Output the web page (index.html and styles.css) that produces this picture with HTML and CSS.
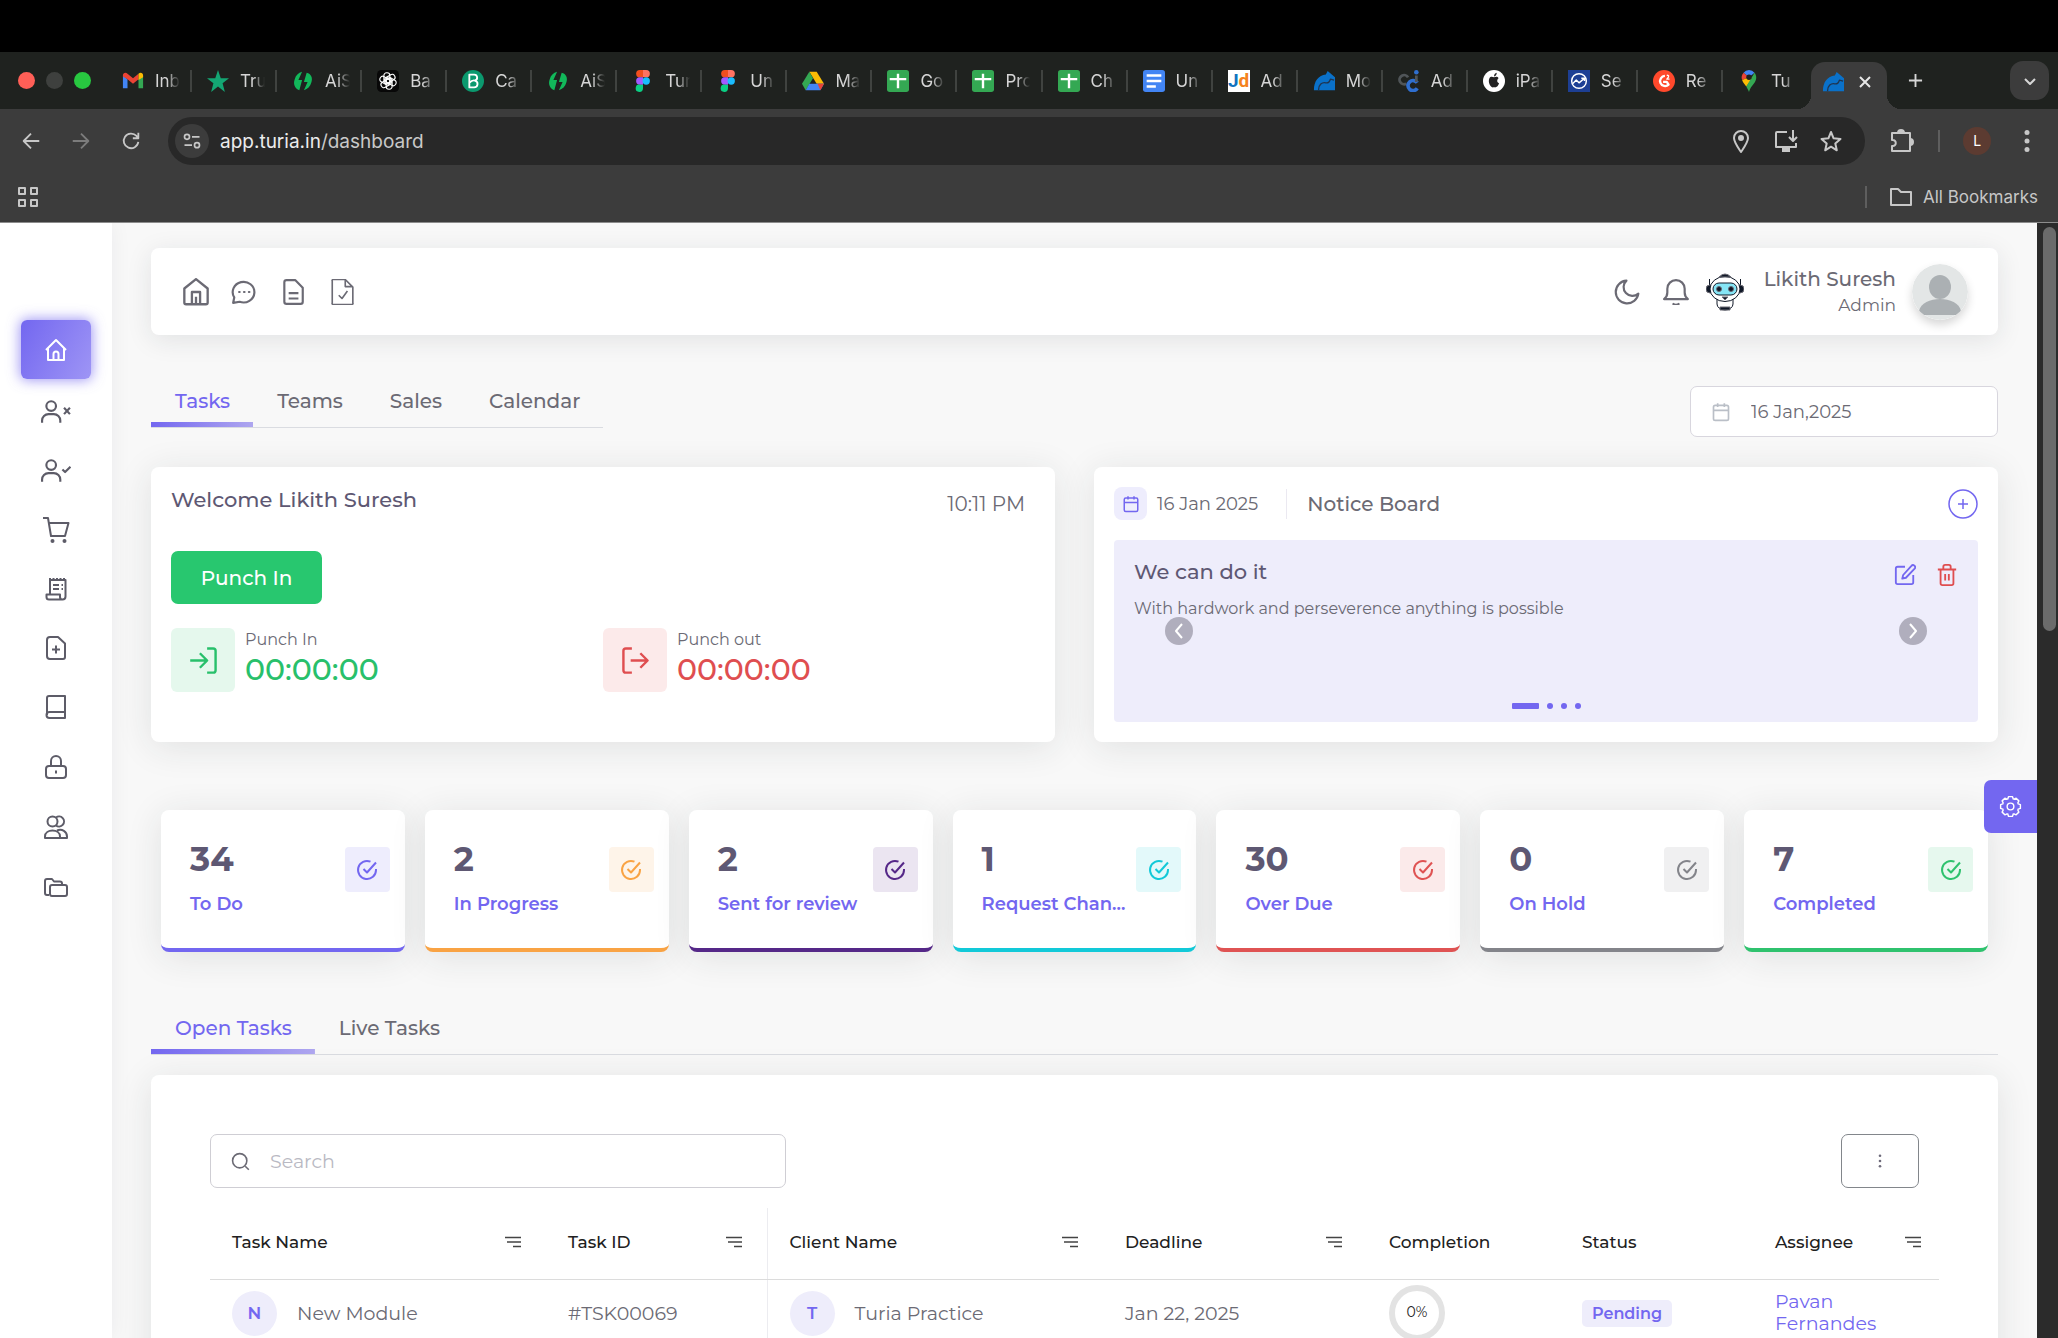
FILE: index.html
```html
<!DOCTYPE html>
<html lang="en">
<head>
<meta charset="utf-8">
<title>Dashboard</title>
<link rel="stylesheet" href="styles.css">
</head>
<body>
<svg class="defs" aria-hidden="true">
  <symbol id="ai" viewBox="0 0 24 24"><path d="M11 2 7 11h4l-3 11C3 20 1 15 3 10c1-4 4-7 8-8z" fill="#12b85a"/><path d="M13 22l4-9h-4l3-10c5 1 7 6 5 11-1 4-4 7-8 8z" fill="#12b85a"/></symbol>
  <symbol id="figma" viewBox="0 0 24 24"><path d="M8.500 0H12v8H8.500a4 4 0 0 1 0-8z" fill="#f24e1e"/><path d="M12 0h3.500a4 4 0 0 1 0 8H12z" fill="#ff7262"/><path d="M8.500 8H12v8H8.500a4 4 0 0 1 0-8z" fill="#a259ff"/><circle cx="15.500" cy="12" r="4" fill="#1abcfe"/><path d="M8.500 16H12v4a4 4 0 1 1-3.500-4z" fill="#0acf83"/></symbol>
  <symbol id="sheet" viewBox="0 0 24 24"><rect width="24" height="24" rx="3" fill="#34a853"/><path d="M12 4v16M3 10h18" stroke="#fff" stroke-width="2.600"/></symbol>
  <symbol id="turia" viewBox="0 0 24 24"><path d="M1 22C1 12 6 6 14 5l2-4 8 7v14H1z" fill="#0a71c9"/><path d="M6 22c0-6 4-9 8-8 3 .500 4-1 5-4l4 1" stroke="#1f3550" stroke-width="1.500" fill="none"/></symbol>
  <symbol id="check" viewBox="0 0 24 24"><path d="M21 11v1a9 9 0 1 1-5.500-8.300M8.500 11l3.500 3.500L21 4.500"/></symbol>
  <symbol id="cal" viewBox="0 0 24 24"><rect x="3" y="4" width="18" height="18" rx="2"/><path d="M8 1.500V6M16 1.500V6M3 10h18"/></symbol>
  <symbol id="sort" viewBox="0 0 16 12"><path d="M0 1.500h16M2 6h14M8 10.500h8"/></symbol>
  <symbol id="user" viewBox="0 0 28 24"><circle cx="9.500" cy="6.500" r="4.500"/><path d="M1 22v-2a6 6 0 0 1 6-6h5a6 6 0 0 1 6 6v2"/></symbol>
  <symbol id="tooth" viewBox="-12 -12 24 24" overflow="visible"><path d="M7.390-3.060L10.310-2V2L7.390 3.060"/></symbol>
</svg>

<div class="topbar"></div>
<div class="tabstrip">
  <div class="lights"><i class="red"></i><i class="off"></i><i class="green"></i></div>
  <div class="tabs">
    <div class="tab"><svg viewBox="0 0 24 24"><path d="M1 6v14h5V10z" fill="#4285f4"/><path d="M23 6v14h-5V10z" fill="#34a853"/><path d="M1 6c0-3 3-4 5-2l6 5 6-5v6l-6 5-6-5-5-3z" fill="#ea4335"/><path d="M18 4c2-2 5-1 5 2v2l-5 3z" fill="#fbbc04"/></svg><span>Inb</span></div>
    <div class="tab"><svg viewBox="0 0 24 24"><path d="M12 0l3 9h9l-7 5.500L19.500 24 12 18l-7.500 6L7 14.500 0 9h9z" fill="#14a673"/></svg><span>Tru</span></div>
    <div class="tab"><svg><use href="#ai"/></svg><span>AiS</span></div>
    <div class="tab"><svg viewBox="0 0 24 24"><rect width="24" height="24" rx="5" fill="#080808"/><g fill="none" stroke="#fff" stroke-width="1.200"><rect x="7.500" y="3" width="6.500" height="12" rx="3" id="petal"/><use href="#petal" transform="rotate(60 12 12)"/><use href="#petal" transform="rotate(120 12 12)"/><use href="#petal" transform="rotate(180 12 12)"/><use href="#petal" transform="rotate(240 12 12)"/><use href="#petal" transform="rotate(300 12 12)"/></g></svg><span>Ba</span></div>
    <div class="tab"><svg viewBox="0 0 24 24"><circle cx="12" cy="12" r="12" fill="#0b996e"/><path d="M8 5h5a3.300 3.300 0 0 1 1 6.500A3.800 3.800 0 0 1 13 19H8zM8 14c2-2 4-3 6-2.500" fill="none" stroke="#fff" stroke-width="2"/></svg><span>Ca</span></div>
    <div class="tab"><svg><use href="#ai"/></svg><span>AiS</span></div>
    <div class="tab"><svg><use href="#figma"/></svg><span>Tur</span></div>
    <div class="tab"><svg><use href="#figma"/></svg><span>Un</span></div>
    <div class="tab"><svg viewBox="0 0 24 24"><path d="M8 2h8l8 13h-8z" fill="#fbbc04"/><path d="M8 2 0 15l4 7L12 9z" fill="#34a853"/><path d="M8 15h16l-4 7H4z" fill="#4285f4"/><path d="M17 15h7l-4 7z" fill="#ea4335"/></svg><span>Ma</span></div>
    <div class="tab"><svg><use href="#sheet"/></svg><span>Go</span></div>
    <div class="tab"><svg><use href="#sheet"/></svg><span>Pro</span></div>
    <div class="tab"><svg><use href="#sheet"/></svg><span>Ch</span></div>
    <div class="tab"><svg viewBox="0 0 24 24"><rect width="24" height="24" rx="3" fill="#4285f4"/><path d="M4 6h16M4 12h16M4 18h10" stroke="#fff" stroke-width="2.600"/></svg><span>Un</span></div>
    <div class="tab"><b class="jd"><em>J</em>d</b><span>Ad</span></div>
    <div class="tab"><svg><use href="#turia"/></svg><span>Mo</span></div>
    <div class="tab"><svg viewBox="0 0 24 24"><g fill="none"><path d="M11 8a5 5 0 1 0-2 7" stroke="#505558" stroke-width="3"/><path d="M21 14a5.500 5.500 0 1 0 0 6" stroke="#2f6fd0" stroke-width="4"/><path d="M20 6v7" stroke="#505558" stroke-width="3"/></g><circle cx="20" cy="2.500" r="2.500" fill="#2f6fd0"/></svg><span>Ad</span></div>
    <div class="tab"><svg viewBox="0 0 24 24"><circle cx="12" cy="12" r="12" fill="#fff"/><path d="M17 9c-1-2-3-2-5-1-2-1-4-1-5 1-2 4 1 10 4 10l1-.500 1 .500c2 0 4-2 4.500-4.500-2.500-1-2.500-4-.500-5.500zM12 7c0-2 1-3.500 3-4 0 2-1 4-3 4z" fill="#222"/></svg><span>iPa</span></div>
    <div class="tab"><svg viewBox="0 0 24 24"><path d="M0 0h24v24H0z" fill="#1d3f94"/><g fill="none" stroke="#fff" stroke-width="1.600"><circle cx="12" cy="12" r="8"/><path d="M5 15l4-4 3 3 6-5M14.500 9H18v3"/></g></svg><span>Se</span></div>
    <div class="tab"><svg viewBox="0 0 24 24"><circle cx="12" cy="12" r="12" fill="#ff492c"/><g fill="none" stroke="#fff"><path d="M13 6.500a5.500 5.500 0 1 0 4 9.500l-2-3h-4" stroke-width="2.500"/><path d="M15 6c2-1 3.500 1 0 4h3" stroke-width="1.400"/></g></svg><span>Re</span></div>
    <div class="tab"><svg viewBox="0 0 24 24"><path d="M12 0a8 8 0 0 0-6 3l6 5 6-5a8 8 0 0 0-6-3z" fill="#4285f4"/><path d="M6 3a8 8 0 0 0-1.500 8L12 8z" fill="#ea4335"/><path d="M4.500 11c1 3 3 5 4.500 7l8-10-5 0z" fill="#fbbc04"/><path d="M18 3c3 4 2 8 0 11-3 4-5 6-6 10-1-3-2-4-3-6z" fill="#34a853"/><circle cx="12" cy="8" r="3" fill="#1f221f"/></svg><span>Tu</span></div>
  </div>
  <div class="tab-active"><svg><use href="#turia"/></svg><button class="plain" aria-label="Close tab"><svg class="x" viewBox="0 0 12 12"><path d="M1 1l10 10M11 1L1 11"/></svg></button></div>
  <button class="plain newtab" aria-label="New tab"><svg viewBox="0 0 16 16"><path d="M8 1v14M1 8h14"/></svg></button>
  <button class="plain tabsearch" aria-label="Search tabs"><svg viewBox="0 0 12 12"><path d="M1 4l5 5 5-5"/></svg></button>
</div>

<div class="chrome">
  <div class="toolbar">
    <div class="navbtns">
      <button class="plain" aria-label="Back"><svg viewBox="0 0 24 24"><path d="M21 12H4M12 4l-8 8 8 8"/></svg></button>
      <button class="plain dim" aria-label="Forward"><svg viewBox="0 0 24 24"><path d="M3 12h17M12 4l8 8-8 8"/></svg></button>
      <button class="plain" aria-label="Reload"><svg viewBox="0 0 24 24"><path d="M20 13a8 8 0 1 1-2-6.500L20 9M20 3v6h-6"/></svg></button>
    </div>
    <div class="urlbar">
      <span class="site"><svg viewBox="0 0 24 24"><circle cx="6" cy="7" r="3"/><path d="M12 7h9M3 17h9"/><circle cx="18" cy="17" r="3"/></svg></span>
      <span class="url">app.turia.in<span>/dashboard</span></span>
      <div class="urlicons">
        <svg viewBox="0 0 24 24"><path d="M12 23C8 17 5 13 5 9a7 7 0 0 1 14 0c0 4-3 8-7 14z"/><circle cx="12" cy="9" r="2" fill="currentColor"/></svg>
        <svg viewBox="0 0 24 24"><path d="M13 3H3a1 1 0 0 0-1 1v14h20v-4M19 1v11M15 8l4 4 4-4"/><path d="M8 21h8" stroke-width="4"/></svg>
        <svg viewBox="0 0 24 24"><path d="M12 3l2.600 6.300 6.900.600-5.200 4.600 1.500 6.800L12 17.700l-5.800 3.600 1.500-6.800L2.500 9.900l6.900-.600z"/></svg>
      </div>
    </div>
    <div class="righticons">
      <svg viewBox="0 0 24 24"><path d="M2 4h18v18H2v-5c5 1 5-7 0-6z"/><path d="M8 4a3 3 0 0 1 6 0zM20 10a3 3 0 0 1 0 6z" fill="currentColor"/></svg>
      <i class="vline"></i>
      <span class="avatar-l">L</span>
      <svg viewBox="0 0 24 24"><g stroke="none" fill="currentColor"><circle cx="12" cy="3.500" r="2.500"/><circle cx="12" cy="12" r="2.500"/><circle cx="12" cy="20.500" r="2.500"/></g></svg>
    </div>
  </div>
  <div class="bookmarks">
    <svg viewBox="0 0 20 20"><path d="M1 1h6v6H1zM13 1h6v6h-6zM1 13h6v6H1zM13 13h6v6h-6z"/></svg>
    <div class="allbm"><i class="vline"></i><svg viewBox="0 0 24 20"><path d="M2 18V2h7l3 3h10v13z"/></svg><span>All Bookmarks</span></div>
  </div>
</div>

<div class="app">
  <nav class="sidebar">
    <a href="#" class="active" aria-label="Home"><svg viewBox="0 0 24 24"><path d="M2 12L12 2l10 10M4 10v12h16V10M9.500 22v-6a2.500 2.500 0 0 1 5 0v6"/></svg></a>
    <a href="#" aria-label="Leads"><svg class="wide" viewBox="0 0 28 24"><use href="#user"/><path d="M21.500 8l5.500 6M27 8l-5.500 6"/></svg></a>
    <a href="#" aria-label="Clients"><svg class="wide" viewBox="0 0 28 24"><use href="#user"/><path d="M20 10.500l2.500 2.500 5-5"/></svg></a>
    <a href="#" aria-label="Sales"><svg class="wide" viewBox="0 0 28 26"><path d="M1 1h5l3 18h14l3.500-13H7"/><g stroke="none" fill="currentColor"><circle cx="10.500" cy="24" r="2"/><circle cx="22.500" cy="24" r="2"/></g></svg></a>
    <a href="#" aria-label="Invoices"><svg viewBox="0 0 24 24"><path d="M6 17V2M6 3h15.500v16.500a3 3 0 0 1-3 3H5A2.500 2.500 0 0 1 2.500 20v-2.500H16V20a2.500 2.500 0 0 0 2.500 2.500M9 8h6M9 12h6M17.500 8h1.500M17.500 12h1.500"/><path d="M5 2h17" stroke-dasharray="2 1.500"/></svg></a>
    <a href="#" aria-label="Add document"><svg viewBox="0 0 24 24"><path d="M6 1h8l7 6.500V21a2 2 0 0 1-2 2H6a3 3 0 0 1-3-3V4a3 3 0 0 1 3-3zM12 9.500v8M8 13.500h8"/></svg></a>
    <a href="#" aria-label="Library"><svg viewBox="0 0 24 24"><path d="M3 20V3a2 2 0 0 1 2-2h16v22H5.500a2.500 2.500 0 0 1 0-6H21"/></svg></a>
    <a href="#" aria-label="Passwords"><svg viewBox="0 0 24 24"><rect x="2" y="11" width="20" height="12" rx="3"/><path d="M7 11V6a5 5 0 0 1 10 0v5M12 15.500v3"/></svg></a>
    <a href="#" aria-label="Teams"><svg viewBox="0 0 24 24"><circle cx="8.500" cy="6.500" r="5"/><path d="M12 2.500a5 5 0 1 1 0 8M1 23v-1.500c0-8 15-8 15 0V23zM13 15.500c5-2 10 1 10 6V23h-7"/></svg></a>
    <a href="#" aria-label="Files"><svg viewBox="0 0 24 24"><path d="M5 20H3a2 2 0 0 1-2-2V6a2 2 0 0 1 2-2h5l2 2.500h6a2 2 0 0 1 2 2V10"/><rect x="6" y="10" width="17" height="11" rx="2"/></svg></a>
  </nav>

  <main class="main">
    <header class="card header">
      <div class="quick">
        <svg viewBox="0 0 24 24"><path d="M2 21V9l10-8 10 8v12a1.500 1.500 0 0 1-1.500 1.500h-17A1.500 1.500 0 0 1 2 21zM8.500 22.500V12h7v10.500M12 22V16"/></svg>
        <svg viewBox="0 0 24 24"><path d="M3 17A10 9.500 0 1 1 8 21l-6 1z"/><path d="M7.500 12h.500M12 12h.500M16.500 12h.500" stroke-linecap="round"/></svg>
        <svg viewBox="0 0 24 24"><path d="M6 1h8l7 7v13a2 2 0 0 1-2 2H6a2 2 0 0 1-2-2V3a2 2 0 0 1 2-2zM8 13h9M8 18h9"/></svg>
        <svg class="thin" viewBox="0 0 24 24"><path d="M4 .500h11l7 7V22a1 1 0 0 1-1 1.500H4A1 1 0 0 1 3 22V2A1 1 0 0 1 4 .500zM15 .500V7h7M9 15l3 3 5-7"/></svg>
      </div>
      <div class="account">
        <svg viewBox="0 0 24 24"><path d="M22.500 13.500A10.500 10.500 0 1 1 11.500 1.500a8 8 0 0 0 11 12z"/></svg>
        <svg viewBox="0 0 24 24"><path d="M1 18.500h22c-2-1.500-3-3-3-6V9A8 8 0 0 0 4 9v3.500c0 3-1 4.500-3 6zM9 22.500a4 4 0 0 0 6 0"/></svg>
        <svg class="bot" viewBox="0 0 38 38"><path d="M3.500 6v10M34.500 6v10" stroke="#101827"/><circle cx="4" cy="16" r="4" fill="#101827"/><circle cx="34" cy="16" r="4" fill="#101827"/><path d="M11 25h16v6a8 6 0 0 1-16 0z" fill="#fff" stroke="#101827"/><path d="M14 34h10v3H14z" fill="#101827"/><ellipse cx="19" cy="16" rx="15" ry="12.500" fill="#fff" stroke="#101827"/><path d="M13 4q6-6 12 0z" fill="#101827"/><rect x="7" y="10" width="24" height="12" rx="6" fill="#86e5f5" stroke="#101827"/><circle cx="13" cy="16" r="2.500" fill="#101827"/><circle cx="25" cy="16" r="2.500" fill="#101827"/><path d="M16 24h6l-3 3z" fill="#101827"/></svg>
        <div class="who"><strong>Likith Suresh</strong><span>Admin</span></div>
        <svg class="avatar" viewBox="0 0 56 56"><circle cx="28" cy="28" r="28" fill="#e3e6e6"/><ellipse cx="28" cy="23" rx="11" ry="12" fill="#abb0b3"/><path d="M7 47c3-16 39-16 42 0q-1 4-4 4H11q-3 0-4-4z" fill="#abb0b3"/></svg>
      </div>
    </header>

    <div class="filters">
      <div class="pagetabs" role="tablist">
        <button class="on" role="tab">Tasks</button><button role="tab">Teams</button><button role="tab">Sales</button><button role="tab">Calendar</button>
      </div>
      <label class="date"><svg><use href="#cal"/></svg><input type="text" value="16 Jan,2025" aria-label="Date"></label>
    </div>

    <div class="duo">
      <section class="card welcome">
        <div class="whead"><h2>Welcome Likith Suresh</h2><time>10:11 PM</time></div>
        <button class="punch">Punch In</button>
        <div class="punches">
          <div class="pitem in"><i><svg viewBox="0 0 24 24"><path d="M15 2h5a2 2 0 0 1 2 2v16a2 2 0 0 1-2 2h-5M1 12h14M9 6l6 6-6 6"/></svg></i><div><span>Punch In</span><b>00:00:00</b></div></div>
          <div class="pitem out"><i><svg viewBox="0 0 24 24"><path d="M9 2H4a2 2 0 0 0-2 2v16a2 2 0 0 0 2 2h5M8 12h14M16 6l6 6-6 6"/></svg></i><div><span>Punch out</span><b>00:00:00</b></div></div>
        </div>
      </section>
      <section class="card notice">
        <div class="nhead">
          <i class="chip"><svg><use href="#cal"/></svg></i><span class="ndate">16 Jan 2025</span><i class="sep"></i><h2>Notice Board</h2>
          <button class="plain add" aria-label="Add notice"><svg viewBox="0 0 30 30"><circle cx="15" cy="15" r="14"/><path d="M15 10v10M10 15h10"/></svg></button>
        </div>
        <div class="slide">
          <div class="shead"><h3>We can do it</h3>
            <div class="acts"><button class="plain edit" aria-label="Edit"><svg viewBox="0 0 24 24"><path d="M12 3H4a2 2 0 0 0-2 2v15a2 2 0 0 0 2 2h15a2 2 0 0 0 2-2v-8M19 2a2.100 2.100 0 0 1 3.500 3L13 15l-4 1 1-4z"/></svg></button><button class="plain del" aria-label="Delete"><svg viewBox="0 0 24 24"><path d="M2 6h20M5 6v15a2 2 0 0 0 2 2h10a2 2 0 0 0 2-2V6M8 5V3a2 2 0 0 1 2-2h4a2 2 0 0 1 2 2v2M10 11v7M14 11v7"/></svg></button></div>
          </div>
          <p>With hardwork and perseverence anything is possible</p>
          <button class="plain arrow prev" aria-label="Previous"><svg viewBox="0 0 28 28"><path d="M17 7l-6 7 6 7"/></svg></button>
          <button class="plain arrow next" aria-label="Next"><svg viewBox="0 0 28 28"><path d="M11 7l6 7-6 7"/></svg></button>
          <div class="dots"><i class="bar"></i><i></i><i></i><i></i></div>
        </div>
      </section>
    </div>

    <div class="stats">
      <div class="stat c1"><div><b>34</b><a href="#">To Do</a></div><i><svg><use href="#check"/></svg></i></div>
      <div class="stat c2"><div><b>2</b><a href="#">In Progress</a></div><i><svg><use href="#check"/></svg></i></div>
      <div class="stat c3"><div><b>2</b><a href="#">Sent for review</a></div><i><svg><use href="#check"/></svg></i></div>
      <div class="stat c4"><div><b>1</b><a href="#">Request Chan...</a></div><i><svg><use href="#check"/></svg></i></div>
      <div class="stat c5"><div><b>30</b><a href="#">Over Due</a></div><i><svg><use href="#check"/></svg></i></div>
      <div class="stat c6"><div><b>0</b><a href="#">On Hold</a></div><i><svg><use href="#check"/></svg></i></div>
      <div class="stat c7"><div><b>7</b><a href="#">Completed</a></div><i><svg><use href="#check"/></svg></i></div>
    </div>

    <div class="pagetabs full" role="tablist"><button class="on" role="tab">Open Tasks</button><button role="tab">Live Tasks</button></div>

    <section class="card tasks">
      <div class="tools">
        <label class="search"><svg viewBox="0 0 24 24"><circle cx="11" cy="11" r="9"/><path d="M18 18l4.500 4.500"/></svg><input type="text" placeholder="Search" aria-label="Search"></label>
        <button class="more" aria-label="More"><svg viewBox="0 0 4 16"><circle cx="2" cy="2" r="1.500"/><circle cx="2" cy="8" r="1.500"/><circle cx="2" cy="14" r="1.500"/></svg></button>
      </div>
      <table>
        <colgroup><col class="w1"><col class="w2"><col class="w1"><col class="w3"><col class="w4"><col class="w4"><col class="w5"></colgroup>
        <thead><tr>
          <th><div>Task Name<svg><use href="#sort"/></svg></div></th>
          <th><div>Task ID<svg><use href="#sort"/></svg></div></th>
          <th class="split"><div>Client Name<svg><use href="#sort"/></svg></div></th>
          <th><div>Deadline<svg><use href="#sort"/></svg></div></th>
          <th>Completion</th>
          <th>Status</th>
          <th><div>Assignee<svg><use href="#sort"/></svg></div></th>
        </tr></thead>
        <tbody><tr>
          <td><div class="ent"><b>N</b>New Module</div></td>
          <td>#TSK00069</td>
          <td class="split"><div class="ent"><b>T</b>Turia Practice</div></td>
          <td>Jan 22, 2025</td>
          <td><span class="ring">0%</span></td>
          <td><span class="badge">Pending</span></td>
          <td><a href="#" class="assignee">Pavan Fernandes</a></td>
        </tr></tbody>
      </table>
    </section>
  </main>
  <button class="plain gear" aria-label="Settings"><svg viewBox="-12 -12 24 24"><g id="quarter"><path d="M7.390-3.060L10.310-2V2L7.390 3.060"/><path d="M7.390-3.060L10.310-2V2L7.390 3.060" transform="rotate(45)"/></g><use href="#quarter" transform="rotate(90)"/><use href="#quarter" transform="rotate(180)"/><use href="#quarter" transform="rotate(270)"/><circle r="3.500"/></svg></button>
  <div class="scroll"><i></i></div>
</div>
</body>
</html>
```
FILE: styles.css
```css
* { box-sizing: border-box; }
body {
  margin: 0;
  height: 100vh;
  overflow: hidden;
  display: flex;
  flex-direction: column;
  background: #f8f8f8;
  font-family: Montserrat, Inter, sans-serif;
  font-size: 18px;
  color: #6b6a74;
}
svg { display: block; width: 24px; height: 24px; fill: none; stroke: currentColor; stroke-width: 2; stroke-linejoin: round; flex: none; }
i, em { font-style: normal; }
h2, h3, p { margin: 0; font-weight: 500; }
a { color: inherit; text-decoration: none; }
button, input { font: inherit; color: inherit; }
.defs { position: absolute; width: 0; height: 0; }
.plain { border: 0; background: none; padding: 0; display: flex; align-items: center; justify-content: center; }

/* Browser frame */
.topbar { height: 52px; background: #000; flex: none; }
.tabstrip { height: 57px; flex: none; background: #1f221f; display: flex; align-items: center; color: #d6d6d6; padding-right: 9px; font-family: Inter, sans-serif; }
.lights { display: flex; gap: 11px; width: 107px; padding-left: 18px; }
.lights i { width: 17px; height: 17px; border-radius: 50%; }
.red { background: #ff5f57; }
.off { background: #3e403e; }
.green { background: #28c840; }
.tabs { flex: 1; display: flex; min-width: 0; }
.tab { flex: 1; display: flex; align-items: center; gap: 11px; padding-left: 15px; height: 22px; border-right: 2px solid #404340; min-width: 0; font-size: 17px; }
.tab:last-child { border-color: transparent; }
.tab svg, .tab-active svg { width: 22px; height: 22px; stroke: none; }
.tab span { white-space: nowrap; mask-image: linear-gradient(90deg, #000 12px, transparent 25px); }
.jd { width: 22px; height: 22px; background: #fff; color: #f58220; font-size: 19px; line-height: 22px; text-align: center; font-family: Roboto, sans-serif; }
.jd em { color: #1274c0; }
.tab-active { position: relative; align-self: flex-end; width: 76px; height: 47px; margin: 0 21px 0 3px; border-radius: 14px 14px 0 0; background: #3c3c3c; display: flex; align-items: center; gap: 15px; padding-left: 11px; padding-bottom: 8px; }
.tab-active::before, .tab-active::after { content: ""; position: absolute; bottom: 0; width: 14px; height: 14px; }
.tab-active::before { left: -14px; background: radial-gradient(circle at 0 0, transparent 14px, #3c3c3c 14px); }
.tab-active::after { right: -14px; background: radial-gradient(circle at 100% 0, transparent 14px, #3c3c3c 14px); }
.tab-active svg.x { width: 12px; height: 12px; stroke: #e6e6e6; }
.newtab svg { width: 15px; height: 15px; }
.newtab { margin-right: 87px; }
.tabsearch { width: 39px; height: 39px; border-radius: 13px; background: #3c3c3c; }
.tabsearch svg { width: 12px; height: 12px; }
.chrome { flex: none; background: #3c3c3c; color: #c7c7c7; border-bottom: 1px solid #8c8c8c; font-family: Inter, sans-serif; }
.toolbar { height: 64px; display: flex; align-items: center; padding: 0 19px 0 20px; }
.navbtns { display: flex; gap: 28px; width: 148px; }
.navbtns svg { width: 22px; height: 22px; stroke-width: 2; }
.dim { color: #7c7c7c; }
.urlbar { flex: 1; height: 48px; border-radius: 24px; background: #282828; display: flex; align-items: center; padding: 0 22px 0 7px; }
.site { width: 34px; height: 34px; border-radius: 50%; background: #3c3c3c; display: flex; align-items: center; justify-content: center; }
.site svg { width: 20px; height: 20px; }
.url { flex: 1; margin-left: 11px; font-size: 19px; color: #ececec; }
.url span { color: #c9c9c9; }
.urlicons { display: flex; gap: 21px; }
.urlicons svg, .righticons svg { width: 24px; height: 24px; }
.righticons { display: flex; align-items: center; padding-left: 25px; width: 174px; justify-content: space-between; }
.vline { width: 2px; height: 22px; background: #5e5e5e; }
.avatar-l { width: 28px; height: 28px; border-radius: 50%; background: #5c3b31; color: #fff; font-size: 14px; line-height: 28px; text-align: center; }
.bookmarks { height: 49px; display: flex; justify-content: space-between; align-items: center; padding: 0 20px 2px 18px; font-size: 17px; }
.bookmarks svg { width: 20px; height: 20px; }
.allbm { display: flex; align-items: center; }
.allbm svg { width: 24px; margin: 0 10px 0 22px; }

/* Application */
.app { position: relative; flex: 1; min-height: 0; display: flex; overflow: hidden; }
.sidebar { width: 112px; flex: none; background: #fff; padding-top: 97px; display: flex; flex-direction: column; align-items: center; color: #5d5c68; box-shadow: 0 0 20px rgba(34, 41, 47, .06); }
.sidebar a { width: 70px; height: 59px; display: flex; align-items: center; justify-content: center; }
.sidebar .active { margin-bottom: 3px; border-radius: 6px; color: #fff; background: linear-gradient(118deg, #7367f0, #9e95f5); box-shadow: 0 0 13px 1px rgba(115, 103, 240, .7); }
.sidebar .wide { width: 30px; height: 26px; }
.sidebar a:nth-child(n+7) { height: 60px; }
.main { flex: 1; min-width: 0; padding: 25px 39px 0; }
.card { background: #fff; border-radius: 8px; box-shadow: 0 5px 36px rgba(34, 41, 47, .11); }
.header { height: 87px; display: flex; justify-content: space-between; align-items: center; padding: 0 30px; box-shadow: 0 5px 26px rgba(34, 41, 47, .1); }
.quick { display: flex; gap: 21px; padding: 1px 0 0 1px; }
.quick svg { width: 28px; height: 28px; }
.quick svg:nth-child(n+2) { width: 26px; height: 26px; margin-top: 1px; margin-right: 2px; }
.quick .thin { stroke-width: 1.5; }
.account { display: flex; align-items: center; }
.account svg { width: 26px; height: 26px; margin-right: 23px; }
.account .bot { width: 38px; height: 38px; margin: 0 20px 0 -6px; stroke-width: 1; }
.account .avatar { width: 56px; height: 56px; margin: 0 0 0 16px; stroke: none; border-radius: 50%; box-shadow: 0 5px 10px rgba(0, 0, 0, .16); }
.who { display: flex; flex-direction: column; align-items: flex-end; line-height: 26px; }
.who strong { font-size: 20px; font-weight: 500; }
.who span { font-size: 17px; }
.filters { margin-top: 51px; height: 50px; display: flex; justify-content: space-between; align-items: flex-start; }
.pagetabs { display: flex; border-bottom: 1px solid #dadce1; height: 42px; }
.pagetabs button { border: 0; background: none; padding: 0 23px 12px 24px; font-size: 20px; font-weight: 500; line-height: 30px; height: 41px; }
.pagetabs .on { color: #7367f0; background: linear-gradient(90deg, #7367f0, #aea6ef) bottom / 100% 5px no-repeat; }
.date { display: flex; align-items: center; gap: 20px; width: 308px; height: 51px; border: 1px solid #d8d6de; border-radius: 7px; background: #fff; padding: 0 20px; }
.date svg { width: 20px; height: 20px; color: #babfc7; stroke-width: 2; }
.date input, .search input { border: 0; outline: 0; background: none; padding: 0; flex: 1; min-width: 0; font-size: 18px; }
.duo { display: grid; grid-template-columns: 1fr 1fr; gap: 39px; margin-top: 31px; }
.welcome { height: 275px; padding: 18px 20px; }
.whead { display: flex; justify-content: space-between; padding-right: 10px; line-height: 30px; height: 66px; }
.whead h2 { font-size: 21px; color: #5e5873; }
.whead time { font-size: 20px; padding-top: 4px; }
.punch { border: 0; width: 151px; height: 53px; border-radius: 7px; background: #28c76f; color: #fff; font-size: 20px; font-weight: 500; display: block; padding: 0; }
.punches { display: grid; grid-template-columns: 1fr 1fr; margin-top: 24px; }
.pitem { display: flex; gap: 10px; }
.pitem > div { padding-top: 1px; }
.pitem i { width: 64px; height: 64px; border-radius: 6px; display: flex; align-items: center; justify-content: center; }
.pitem i svg { width: 29px; height: 29px; }
.pitem span { display: block; font-size: 16px; line-height: 22px; }
.pitem b { display: block; font-size: 30px; font-weight: 500; line-height: 38px; }
.in i { background: #e5f8ed; } .in i, .in b { color: #28c06b; }
.out i { background: #fceaea; } .out i, .out b { color: #df4e50; }
.notice { height: 275px; padding: 20px; }
.nhead { display: flex; align-items: center; height: 33px; }
.chip { width: 33px; height: 33px; border-radius: 8px; background: #eeedfd; color: #7367f0; display: flex; align-items: center; justify-content: center; }
.chip svg { width: 18px; height: 18px; }
.ndate { margin-left: 10px; font-size: 18px; }
.nhead .sep { width: 1px; height: 30px; background: #ebe9f1; margin: 0 20px 0 28px; }
.nhead h2 { font-size: 20px; flex: 1; }
.add svg { width: 30px; height: 30px; color: #7367f0; stroke-width: 1.5; }
.slide { position: relative; margin-top: 20px; height: 182px; border-radius: 4px; background: #eeedfb; padding: 17px 20px; }
.shead { display: flex; justify-content: space-between; line-height: 30px; }
.shead h3 { font-size: 21px; color: #5e5873; }
.acts { display: flex; gap: 20px; padding-top: 5px; }
.acts svg { width: 22px; height: 22px; }
.edit { color: #7367f0; } .del { color: #df4e50; }
.slide p { margin-top: 10px; font-size: 16px; line-height: 24px; font-weight: 400; }
.arrow { position: absolute; top: 77px; width: 28px; height: 28px; border-radius: 50%; background: #b0aebd; color: #fff; }
.arrow svg { width: 28px; height: 28px; }
.prev { left: 51px; } .next { right: 51px; }
.dots { position: absolute; left: 0; right: 0; bottom: 13px; display: flex; justify-content: center; align-items: center; gap: 8px; }
.dots i { width: 6px; height: 6px; border-radius: 50%; background: #7367f0; }
.dots .bar { width: 27px; border-radius: 1px; }
.stats { display: grid; grid-template-columns: repeat(7, 1fr); gap: 20px; margin: 68px 10px 0; }
.stat { height: 142px; background: #fff; border-radius: 8px; border-bottom: 4px solid var(--c); padding: 27px 15px 0 29px; display: flex; justify-content: space-between; box-shadow: 0 5px 36px rgba(34, 41, 47, .11); }
.stat b { display: block; font-size: 34px; line-height: 44px; color: #5e5873; }
.stat a { display: block; margin-top: 11px; font-size: 18px; line-height: 24px; font-weight: 600; color: #7367f0; white-space: nowrap; }
.stat > div { width: 0; flex: 1; }
.stat i { width: 45px; height: 45px; margin-top: 10px; border-radius: 4px; display: flex; align-items: center; justify-content: center; color: var(--c); background: color-mix(in srgb, var(--c) 12%, #fff); }
.c1 { --c: #7367f0; } .c2 { --c: #f9a344; } .c3 { --c: #552888; } .c4 { --c: #12c9d8; } .c5 { --c: #df5353; } .c6 { --c: #83848a; } .c7 { --c: #2fc26e; }
.full { margin-top: 61px; }
.tasks { margin-top: 20px; padding: 59px 59px 40px; }
.tools { display: flex; justify-content: space-between; padding-right: 20px; }
.search { display: flex; align-items: center; gap: 20px; width: 576px; height: 54px; border: 1px solid #cfced4; border-radius: 7px; padding: 0 20px; }
.search svg { width: 19px; height: 19px; }
.search input { font-size: 19px; }
.search input::placeholder { color: #b9b9c3; opacity: 1; }
.more { width: 78px; height: 54px; border: 1px solid #82868b; border-radius: 7px; background: none; display: flex; align-items: center; justify-content: center; padding: 0; }
.more svg { width: 4px; height: 14px; fill: #6e6b7b; stroke: none; }
table { width: 100%; table-layout: fixed; border-collapse: collapse; margin-top: 20px; }
.w1 { width: 336px; } .w2 { width: 221px; } .w3 { width: 264px; } .w4 { width: 193px; } .w5 { width: 186px; }
th { height: 71px; padding: 0 0 3px 22px; text-align: left; font-size: 17px; font-weight: 500; color: #212121; border-bottom: 1px solid #dcdcdc; }
th div { display: flex; justify-content: space-between; align-items: center; padding-right: 25px; }
th:last-child div { padding-right: 18px; }
th svg { width: 16px; height: 12px; color: #444; stroke-width: 1.5; }
td { height: 68px; padding: 0 0 0 22px; font-size: 19px; }
.split { border-left: 1px solid #ececf0; }
.ent { display: flex; align-items: center; gap: 20px; }
.ent b { width: 45px; height: 45px; border-radius: 50%; background: #eeedfb; color: #7367f0; font-size: 17px; font-weight: 600; line-height: 45px; text-align: center; }
.ring { display: block; width: 56px; height: 56px; border-radius: 50%; border: 6px solid #e3e3e3; text-align: center; font-size: 14px; line-height: 42px; color: #222; }
.badge { display: inline-block; padding: 0 10px; border-radius: 5px; background: #eeedfb; color: #7367f0; font-size: 16px; font-weight: 600; line-height: 27px; }
.assignee { display: block; width: 120px; line-height: 22px; color: #7367f0; }
.gear { position: absolute; top: 557px; right: 21px; width: 53px; height: 53px; border-radius: 7px 0 0 7px; background: #7367f0; color: #fff; }
.gear svg { width: 23px; height: 23px; stroke-width: 1.5; }
.scroll { width: 21px; flex: none; background: #2b2b2b; padding: 4px 2px 0 6px; }
.scroll i { display: block; height: 404px; border-radius: 7px; background: #6b6b6b; }
```
